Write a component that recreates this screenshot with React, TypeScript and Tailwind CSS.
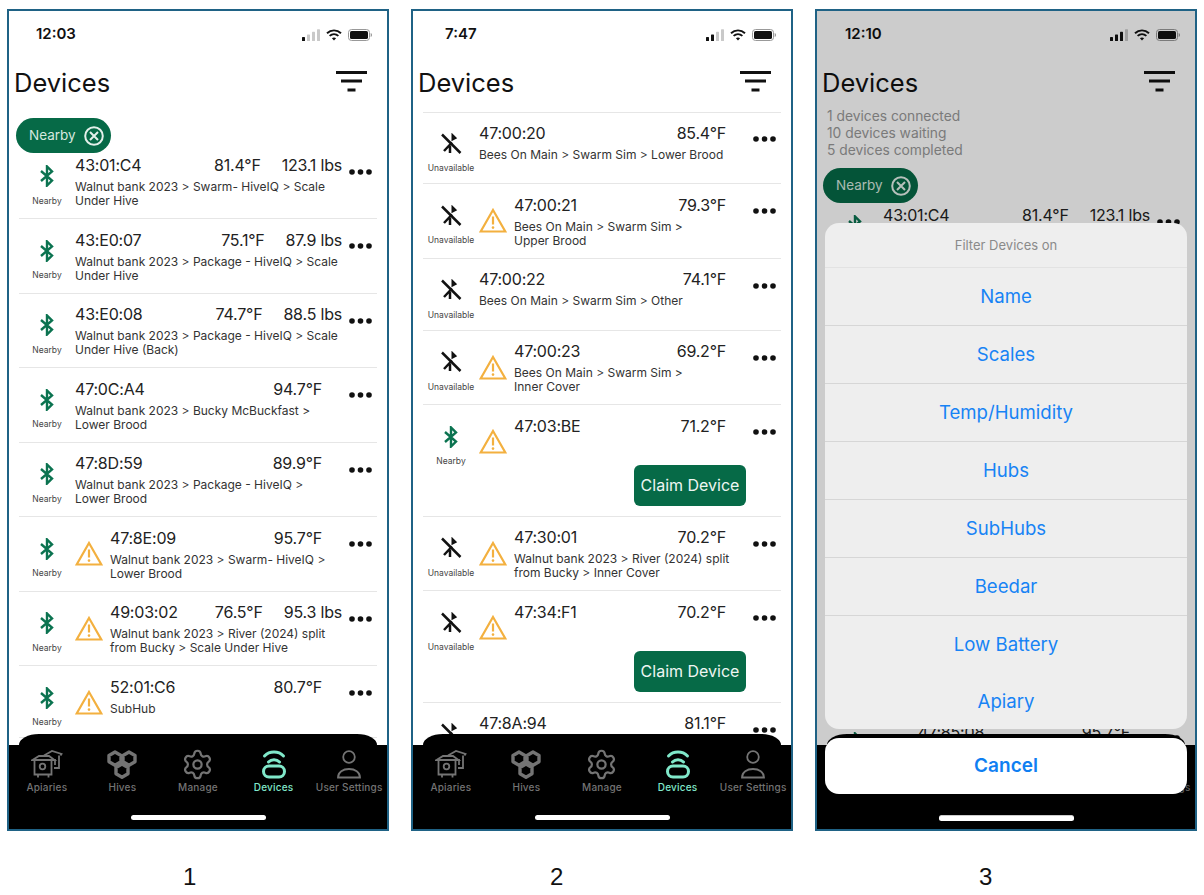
import React from "react";
import { Settings } from "lucide-react";

type Device = {
  id: string;
  temp: string;
  lbs?: string;
  path?: string;
  nearby?: boolean;
  warn?: boolean;
  claim?: boolean;
};

const nearbyList: Device[] = [
  { id: "43:01:C4", temp: "81.4°F", lbs: "123.1 lbs", path: "Walnut bank 2023 > Swarm- HiveIQ > Scale\nUnder Hive", nearby: true },
  { id: "43:E0:07", temp: "75.1°F", lbs: "87.9 lbs", path: "Walnut bank 2023 > Package - HiveIQ > Scale\nUnder Hive", nearby: true },
  { id: "43:E0:08", temp: "74.7°F", lbs: "88.5 lbs", path: "Walnut bank 2023 > Package - HiveIQ > Scale\nUnder Hive (Back)", nearby: true },
  { id: "47:0C:A4", temp: "94.7°F", path: "Walnut bank 2023 > Bucky McBuckfast >\nLower Brood", nearby: true },
  { id: "47:8D:59", temp: "89.9°F", path: "Walnut bank 2023 > Package - HiveIQ >\nLower Brood", nearby: true },
  { id: "47:8E:09", temp: "95.7°F", path: "Walnut bank 2023 > Swarm- HiveIQ >\nLower Brood", nearby: true, warn: true },
  { id: "49:03:02", temp: "76.5°F", lbs: "95.3 lbs", path: "Walnut bank 2023 > River (2024) split\nfrom Bucky > Scale Under Hive", nearby: true, warn: true },
  { id: "52:01:C6", temp: "80.7°F", path: "SubHub", nearby: true, warn: true },
];

const allList: Device[] = [
  { id: "47:00:20", temp: "85.4°F", path: "Bees On Main > Swarm Sim > Lower Brood" },
  { id: "47:00:21", temp: "79.3°F", path: "Bees On Main > Swarm Sim >\nUpper Brood", warn: true },
  { id: "47:00:22", temp: "74.1°F", path: "Bees On Main > Swarm Sim > Other" },
  { id: "47:00:23", temp: "69.2°F", path: "Bees On Main > Swarm Sim >\nInner Cover", warn: true },
  { id: "47:03:BE", temp: "71.2°F", nearby: true, warn: true, claim: true },
  { id: "47:30:01", temp: "70.2°F", path: "Walnut bank 2023 > River (2024) split\nfrom Bucky > Inner Cover", warn: true },
  { id: "47:34:F1", temp: "70.2°F", warn: true, claim: true },
  { id: "47:8A:94", temp: "81.1°F", path: "Bees On Main > Swarm Sim > Other" },
];

// rows behind the action sheet, only the first and last peek out
const sheetList: Device[] = [
  nearbyList[0],
  nearbyList[1],
  nearbyList[2],
  { id: "47:0C:A4", temp: "94.7°F", path: "SubHub", nearby: true },
  { id: "47:8D:59", temp: "89.9°F", path: "SubHub", nearby: true },
  nearbyList[5],
  nearbyList[6],
  { id: "47:85:08", temp: "95.7°F", path: "SubHub", nearby: true, warn: true },
];

const filters = ["Name", "Scales", "Temp/Humidity", "Hubs", "SubHubs", "Beedar", "Low Battery", "Apiary"];

function BluetoothOn() {
  return (
    <svg width="16" height="22" viewBox="0 0 16 22" fill="none" stroke="#0b7350" strokeWidth="2.4">
      <path d="M2 6l11 9.5L8 20.5V1.5l5 5L2 16" />
    </svg>
  );
}

function BluetoothOff() {
  return (
    <svg width="22" height="22" viewBox="0 0 22 22" fill="none" stroke="#111" strokeWidth="2.5">
      <path d="M2 1.5L20.5 20" />
      <path d="M4 18l8-8.5M10 13v7" />
      <path d="M12.5 2v4.5l3-1.6z" strokeWidth="2" />
    </svg>
  );
}

function Warning() {
  return (
    <svg width="28" height="25" viewBox="0 0 28 25" fill="none">
      <path d="M14 2L26.3 23.5H1.7Z" stroke="#f3b03f" strokeWidth="2.2" />
      <path d="M14 8.5v8" stroke="#f3b03f" strokeWidth="2.2" />
      <circle cx="14" cy="19.6" r="1.3" fill="#f3b03f" />
    </svg>
  );
}

function Dots() {
  return (
    <svg width="23" height="6" viewBox="0 0 23 6" fill="#111">
      <circle cx="3" cy="3" r="2.8" />
      <circle cx="11.5" cy="3" r="2.8" />
      <circle cx="20" cy="3" r="2.8" />
    </svg>
  );
}

function StatusIcons({ bars }: { bars: number }) {
  return (
    <div className="flex items-center gap-[6px]">
      <svg width="18" height="12" viewBox="0 0 18 12">
        {[0, 1, 2, 3].map((i) => (
          <rect key={i} x={i * 5} y={8 - i * 2.6} width="3" height={4 + i * 2.6} rx="0.6" fill={i < bars ? "#111" : "#c9c9c9"} />
        ))}
      </svg>
      <svg width="16" height="12" viewBox="0 0 16 12" fill="none" stroke="#111" strokeWidth="1.9">
        <path d="M1 4.2c4-3.8 10-3.8 14 0" />
        <path d="M3.6 6.9c2.6-2.3 6.2-2.3 8.8 0" />
        <path d="M8 11.6L5.9 9.3c1.2-1 3-1 4.2 0z" fill="#111" stroke="none" />
      </svg>
      <svg width="24" height="12" viewBox="0 0 24 12">
        <rect x="0.5" y="0.5" width="21" height="11" rx="3" fill="none" stroke="#999" />
        <rect x="2" y="2" width="18" height="8" rx="1.6" fill="#111" />
        <path d="M22.7 4v4c.8-.3 1.3-1.1 1.3-2s-.5-1.7-1.3-2z" fill="#999" />
      </svg>
    </div>
  );
}

function FilterIcon() {
  return (
    <svg className="mb-[6px]" width="31" height="21" viewBox="0 0 31 21" fill="#111">
      <rect x="0" y="0" width="31" height="3" />
      <rect x="5" y="8.5" width="21" height="3" />
      <rect x="11.5" y="17.5" width="8" height="3" />
    </svg>
  );
}

function NearbyChip() {
  return (
    <div className="flex h-[35px] w-[95px] items-center gap-[8px] rounded-full bg-[#066a47] pl-[13px] text-[13.5px] text-[#d5e8df]">
      <span>Nearby</span>
      <svg width="20" height="20" viewBox="0 0 20 20" fill="none" stroke="#e4f0ea" strokeWidth="2">
        <circle cx="10" cy="10" r="8.8" />
        <path d="M6 6l8 8M14 6l-8 8" />
      </svg>
    </div>
  );
}

function Row({ device }: { device: Device }) {
  return (
    <div className="mx-[9px] flex border-b border-[#e6e6e6] pt-[10px] pb-[10px]">
      <div className="flex h-[51px] w-[56px] shrink-0 flex-col items-center">
        <div className="mt-[10.5px] flex h-[22px] items-center">
          {device.nearby ? <BluetoothOn /> : <BluetoothOff />}
        </div>
        <span className="mt-[8.5px] text-[8.5px] leading-[11px] text-[#444]">
          {device.nearby ? "Nearby" : "Unavailable"}
        </span>
      </div>
      {device.warn && (
        <div className="w-[35px] shrink-0 pt-[14px]">
          <Warning />
        </div>
      )}
      <div className="min-w-0 flex-1">
        <div className="flex h-[21px] items-center justify-between text-[16px] tracking-[-0.2px] text-[#222]">
          <span>{device.id}</span>
          <div className={`flex gap-[21px] ${device.lbs ? "" : "pr-[20px]"}`}>
            <span>{device.temp}</span>
            {device.lbs && <span>{device.lbs}</span>}
          </div>
        </div>
        {device.path && (
          <div className="mt-[4.5px] text-[12px] leading-[14px] whitespace-pre text-[#333]">{device.path}</div>
        )}
        {device.claim && (
          <div className="mt-[28.5px] flex justify-end">
            <button className="h-[41px] w-[112px] rounded-[6px] bg-[#066a47] text-[16px] text-[#eef6f2]">Claim Device</button>
          </div>
        )}
      </div>
      <div className="w-[35px] shrink-0 pt-[14px] pl-[7px]">
        <Dots />
      </div>
    </div>
  );
}

function TabBar() {
  const gray = "#747474";
  const tabs = [
    {
      label: "Apiaries",
      icon: (
        <svg width="32" height="29" viewBox="0 0 32 29" fill="none" stroke={gray} strokeWidth="1.8">
          <path d="M1.5 10L8 6h10l5.5 4z" />
          <path d="M3.5 10v14.5h17V10" />
          <circle cx="11.5" cy="16.5" r="2.8" />
          <path d="M7 24.5v3M17.5 24.5v3" />
          <path d="M13 5.5L21 1l9.5 3-1 1.5M28 5.5V18h-5" />
          <path d="M24 9v6" />
        </svg>
      ),
    },
    {
      label: "Hives",
      icon: (
        <svg width="32" height="29" viewBox="0 0 32 29" fill="none" stroke={gray} strokeWidth="3.4" strokeLinejoin="round">
          <path d="M9 2l6 3.4v6.4L9 15.2l-6-3.4V5.4z" />
          <path d="M23 2l6 3.4v6.4l-6 3.4-6-3.4V5.4z" />
          <path d="M16 14l6 3.4v6.4L16 27.2l-6-3.4v-6.4z" />
        </svg>
      ),
    },
    {
      label: "Manage",
      icon: (
        <div className="flex h-[29px] items-center">
          <Settings size={33} color={gray} strokeWidth={1.6} />
        </div>
      ),
    },
    {
      label: "Devices",
      icon: (
        <svg width="32" height="29" viewBox="0 0 32 29" fill="none" stroke="#80e8ca" strokeWidth="3" strokeLinecap="round">
          <path d="M6.5 6C11.5 .8 20.5 .8 25.5 6" />
          <path d="M10.5 12c3-3 8-3 11 0" />
          <rect x="5.5" y="16" width="21" height="11" rx="5.5" />
        </svg>
      ),
    },
    {
      label: "User Settings",
      icon: (
        <svg width="32" height="29" viewBox="0 0 32 29" fill="none" stroke={gray} strokeWidth="1.8">
          <circle cx="16" cy="7" r="5.8" />
          <path d="M5 27.5c0-5.5 5-8.5 11-8.5s11 3 11 8.5z" />
        </svg>
      ),
    },
  ];

  return (
    <div className="absolute right-0 bottom-0 left-0 z-10">
      <div className="mx-[10px] h-[11px] bg-black [border-radius:20px_20px_0_0/11px_11px_0_0]" />
      <div className="flex h-[84px] flex-col bg-black pt-[5px]">
        <div className="flex">
          {tabs.map((tab) => (
            <div key={tab.label} className="flex flex-1 flex-col items-center">
              {tab.icon}
              <span
                className={`mt-[2px] text-[10px] leading-[12px] font-medium tracking-[0.2px] whitespace-nowrap ${
                  tab.label === "Devices" ? "text-[#80e8ca]" : "text-[#747474]"
                }`}
              >
                {tab.label}
              </span>
            </div>
          ))}
        </div>
        <div className="mx-auto mt-[22px] h-[5px] w-[135px] rounded-full bg-white" />
      </div>
    </div>
  );
}

function ActionSheet() {
  return (
    <div className="absolute top-[212px] right-[8px] left-[8px] z-30 flex flex-col gap-[9px]">
      <div className="flex flex-col rounded-[14px] bg-[#eeeeee]">
        <div className="flex h-[45px] items-center justify-center border-b border-[#e2e2e2] pt-[1px] text-[13px] text-[#8a8a8a]">
          Filter Devices on
        </div>
        {filters.map((name, i) => (
          <div
            key={name}
            className={`flex items-center justify-center text-[18.6px] text-[#1783f5] ${
              i < 6 ? "border-b border-[#d6d6d6]" : ""
            } ${i === 7 ? "h-[55px]" : "h-[58px]"}`}
          >
            {name}
          </div>
        ))}
      </div>
      <div className="flex h-[56px] items-center justify-center rounded-[14px] bg-white pt-[1px] text-[19px] font-semibold text-[#0f7ff2]">
        Cancel
      </div>
    </div>
  );
}

function Phone({
  time,
  bars,
  label,
  timeCls,
  labelCls,
  children,
}: {
  time: string;
  bars: number;
  label: string;
  timeCls: string;
  labelCls: string;
  children: React.ReactNode;
}) {
  return (
    <div className="w-[382px]">
      <div className="relative h-[822px] overflow-hidden border-2 border-[#1f6285] bg-white px-[1px] pt-[1px]">
        <div className="flex h-[45px] items-center justify-between pr-[14px] text-[15px] font-semibold text-[#111]">
          <span className={timeCls}>{time}</span>
          <StatusIcons bars={bars} />
        </div>
        <div className="flex h-[55px] items-center justify-between pr-[19px] pl-[4px]">
          <span className="mb-[3px] text-[25.5px] text-[#111]">Devices</span>
          <FilterIcon />
        </div>
        {children}
      </div>
      <div className={`mt-[30px] text-[24px] leading-[32px] text-[#111] [font-family:'Liberation_Sans',sans-serif] ${labelCls}`}>
        {label}
      </div>
    </div>
  );
}

export default function App() {
  return (
    <div className="flex h-[895px] w-[1204px] gap-[22px] overflow-hidden bg-white pt-[9px] pl-[7px] [font-family:Inter,sans-serif]">
      <Phone time="12:03" bars={1} label="1" timeCls="pl-[26px]" labelCls="ml-[176px]">
        <div className="relative z-[1] mt-[6px] mb-[-8.5px] ml-[6px] w-fit">
          <NearbyChip />
        </div>
        {nearbyList.map((d) => (
          <Row key={d.id} device={d} />
        ))}
        <TabBar />
      </Phone>

      <Phone time="7:47" bars={2} label="2" timeCls="pl-[31px]" labelCls="ml-[139px]">
        <div className="mx-[9px] -mb-px border-t border-[#e6e6e6]" />
        {allList.map((d) => (
          <Row key={d.id} device={d} />
        ))}
        <TabBar />
      </Phone>

      <Phone time="12:10" bars={3} label="3" timeCls="pl-[27px]" labelCls="ml-[164px]">
        <div className="-mt-[4px] pl-[9px] text-[13.8px] leading-[17px] text-[#999]">
          <div>1 devices connected</div>
          <div>10 devices waiting</div>
          <div>5 devices completed</div>
        </div>
        <div className="relative z-[1] mt-[9px] mb-[-8.5px] ml-[5px] w-fit">
          <NearbyChip />
        </div>
        {sheetList.map((d) => (
          <Row key={d.id} device={d} />
        ))}
        <TabBar />
        <div className="absolute inset-0 z-20 bg-black/20" />
        <div className="absolute bottom-[8px] left-[122px] z-30 h-[5px] w-[135px] rounded-full bg-white" />
        <ActionSheet />
      </Phone>
    </div>
  );
}
